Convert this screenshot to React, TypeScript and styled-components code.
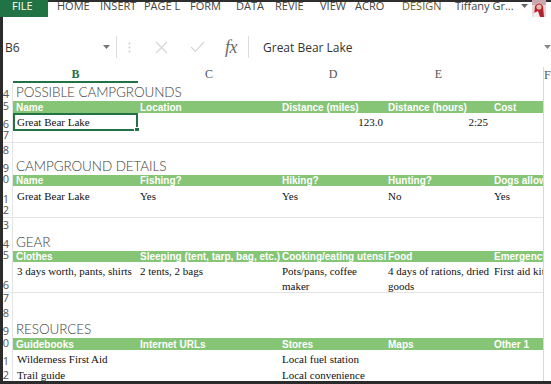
import React from "react";
import styled, { createGlobalStyle } from "styled-components";

const Global = createGlobalStyle`
  html, body { margin: 0; padding: 0; background: #ffffff; }
  body { width: 551px; height: 384px; overflow: hidden; }
  * { box-sizing: border-box; }
`;

const GREEN = "#217346";
const BAND = "#86c476";
const COLS = [125, 142, 106, 105, 52];
const PAD_L = [3, 2, 2, 2, 3];

const Root = styled.div`
  width: 551px;
  height: 384px;
  display: flex;
  flex-direction: column;
  overflow: hidden;
  background: #ffffff;
`;

const TabBar = styled.div`
  height: 17px;
  flex: none;
  display: flex;
  align-items: flex-start;
  background: #ffffff;
  box-shadow: inset 0 2px 0 #2e2e2e;
  font-family: "Open Sans", "Noto Sans", sans-serif;
  font-size: 11px;
  line-height: 12px;
  color: #444;
`;

const FileTab = styled.div`
  width: 48px;
  height: 17px;
  background: ${GREEN};
  color: #ffffff;
  padding-left: 12px;
  margin-right: 9px;
`;

const Tab = styled.div<{ $w: number; $accent?: boolean }>`
  width: ${(p) => p.$w}px;
  flex: none;
  white-space: nowrap;
  overflow: hidden;
  color: ${(p) => (p.$accent ? "#6f5c1c" : "#444")};
`;

const UserTab = styled.div`
  width: 77px;
  flex: none;
  display: flex;
  align-items: center;
  white-space: nowrap;
  gap: 7px;
`;

const Body = styled.div`
  flex: 1;
  display: flex;
  flex-direction: column;
  border-left: 3px solid #2b2b2b;
  border-bottom: 3px solid #2b2b2b;
  min-height: 0;
`;

const FormulaBar = styled.div`
  flex: none;
  height: 50px;
  padding-top: 19px;
  padding-bottom: 9px;
  display: flex;
  align-items: center;
`;

const NameBox = styled.div`
  width: 113px;
  height: 22px;
  display: flex;
  align-items: center;
  justify-content: space-between;
  padding: 0 6px 0 2px;
  font-family: "Open Sans", "Noto Sans", sans-serif;
  font-size: 12px;
  color: #333;
`;

const Sep = styled.div`
  width: 1px;
  height: 22px;
  background: #dcdcdc;
  flex: none;
`;

const Slot = styled.div<{ $w: number }>`
  width: ${(p) => p.$w}px;
  height: 22px;
  flex: none;
  display: flex;
  align-items: center;
  justify-content: center;
`;

const Fx = styled.span`
  font-family: "Liberation Serif", "DejaVu Serif", serif;
  font-style: italic;
  font-size: 18px;
  color: #6a6a6a;
  letter-spacing: -0.5px;
`;

const FormulaText = styled.div`
  flex: 1;
  padding-left: 14px;
  font-family: "Open Sans", "Noto Sans", sans-serif;
  font-size: 12px;
  color: #333;
`;

const Sheet = styled.div`
  flex: 1;
  display: flex;
  min-height: 0;
  overflow: hidden;
`;

const Main = styled.div`
  width: 540px;
  flex: none;
  display: flex;
  flex-direction: column;
  overflow: hidden;
`;

const RightStrip = styled.div`
  flex: 1;
  border-left: 1px solid #d8d8d8;
  overflow: hidden;
`;

const ColHeaderRow = styled.div`
  height: 16px;
  flex: none;
  display: flex;
`;

const Corner = styled.div`
  width: 10px;
  flex: none;
`;

const ColHead = styled.div<{ $w: number; $active?: boolean }>`
  width: ${(p) => p.$w}px;
  flex: none;
  display: flex;
  align-items: center;
  justify-content: center;
  font-family: "Liberation Serif", "DejaVu Serif", serif;
  font-size: 12px;
  font-weight: ${(p) => (p.$active ? 700 : 400)};
  color: ${(p) => (p.$active ? GREEN : "#555")};
  border-bottom: 2px solid ${(p) => (p.$active ? GREEN : "transparent")};
`;

const StripHead = styled.div`
  height: 16px;
  display: flex;
  align-items: center;
  font-family: "Liberation Serif", "DejaVu Serif", serif;
  font-size: 12px;
  color: #555;
`;

const Row = styled.div<{ $h: number; $line?: boolean }>`
  height: ${(p) => p.$h}px;
  flex: none;
  display: flex;
  border-bottom: ${(p) => (p.$line ? "1px solid #e4e4e4" : "none")};
`;

const RowNum = styled.div`
  width: 10px;
  flex: none;
  overflow: hidden;
  white-space: nowrap;
  display: flex;
  align-items: flex-end;
  justify-content: flex-end;
  padding: 0 3px 1px 0;
  border-right: 1px solid #e4e4e4;
  font-family: "Open Sans", "Noto Sans", sans-serif;
  font-size: 11px;
  line-height: 13px;
  color: #555;
`;

const Cells = styled.div<{ $band?: boolean }>`
  flex: 1;
  display: flex;
  background: ${(p) => (p.$band ? BAND : "transparent")};
  overflow: hidden;
`;

const Title = styled.div`
  padding-left: 3px;
  display: flex;
  align-items: center;
  font-family: Lato, "Open Sans", sans-serif;
  font-weight: 300;
  font-size: 13.5px;
  letter-spacing: -0.1px;
  color: #3c3c3c;
  white-space: nowrap;
`;

const HeadCell = styled.div<{ $w: number; $pl: number }>`
  width: ${(p) => p.$w}px;
  flex: none;
  overflow: hidden;
  white-space: nowrap;
  padding-left: ${(p) => p.$pl}px;
  display: flex;
  align-items: center;
  font-family: "Liberation Sans", Arial, sans-serif;
  font-weight: 700;
  font-size: 10px;
  color: #ffffff;
`;

const DataCell = styled.div<{
  $w: number;
  $pl: number;
  $right?: boolean;
  $wrap?: boolean;
  $top?: boolean;
  $sel?: boolean;
}>`
  position: relative;
  width: ${(p) => p.$w}px;
  flex: none;
  white-space: ${(p) => (p.$wrap ? "normal" : "nowrap")};
  overflow: ${(p) => (p.$sel ? "visible" : "hidden")};
  padding-left: ${(p) => (p.$sel ? p.$pl - 2 : p.$pl)}px;
  padding-right: ${(p) => (p.$right ? 3 : 0)}px;
  padding-top: ${(p) => (p.$top ? 2 : 0)}px;
  display: flex;
  align-items: ${(p) => (p.$top ? "flex-start" : "center")};
  justify-content: ${(p) => (p.$right ? "flex-end" : "flex-start")};
  border: ${(p) => (p.$sel ? `2px solid ${GREEN}` : "none")};
  font-family: "Liberation Serif", "Times New Roman", serif;
  font-size: 11px;
  line-height: 15px;
  color: #111;
`;

const Handle = styled.span`
  position: absolute;
  right: -4px;
  bottom: -4px;
  width: 6px;
  height: 6px;
  background: ${GREEN};
  border: 1px solid #ffffff;
`;

type RowDef = {
  n: number;
  h: number;
  kind?: "title" | "head" | "data";
  text?: string;
  cells?: string[];
  line?: boolean;
  wrap?: number[];
  right?: number[];
  sel?: boolean;
};

const rows: RowDef[] = [
  { n: 4, h: 18, kind: "title", text: "POSSIBLE CAMPGROUNDS" },
  { n: 5, h: 12, kind: "head", cells: ["Name", "Location", "Distance (miles)", "Distance (hours)", "Cost"] },
  { n: 6, h: 18, kind: "data", cells: ["Great Bear Lake", "", "123.0", "2:25", ""], right: [2, 3], sel: true },
  { n: 7, h: 12, line: true },
  { n: 8, h: 14 },
  { n: 9, h: 18, kind: "title", text: "CAMPGROUND DETAILS" },
  { n: 10, h: 11, kind: "head", cells: ["Name", "Fishing?", "Hiking?", "Hunting?", "Dogs allowed?"] },
  { n: 11, h: 20, kind: "data", cells: ["Great Bear Lake", "Yes", "Yes", "No", "Yes"] },
  { n: 12, h: 12, line: true },
  { n: 13, h: 14 },
  { n: 14, h: 19, kind: "title", text: "GEAR" },
  { n: 15, h: 11, kind: "head", cells: ["Clothes", "Sleeping (tent, tarp, bag, etc.)", "Cooking/eating utensils", "Food", "Emergency"] },
  {
    n: 16,
    h: 31,
    kind: "data",
    wrap: [0, 1, 2, 3],
    line: true,
    cells: ["3 days worth, pants, shirts", "2 tents, 2 bags", "Pots/pans, coffee maker", "4 days of rations, dried goods", "First aid kit"],
  },
  { n: 17, h: 12 },
  { n: 18, h: 15 },
  { n: 19, h: 18, kind: "title", text: "RESOURCES" },
  { n: 20, h: 12, kind: "head", cells: ["Guidebooks", "Internet URLs", "Stores", "Maps", "Other 1"] },
  { n: 21, h: 18, kind: "data", cells: ["Wilderness First Aid", "", "Local fuel station", "", ""] },
  { n: 22, h: 14, kind: "data", cells: ["Trail guide", "", "Local convenience", "", ""] },
];

const Caret = ({ color = "#777" }: { color?: string }) => (
  <svg width="7" height="4" viewBox="0 0 7 4">
    <path d="M0 0 H7 L3.5 4 Z" fill={color} />
  </svg>
);

const AvatarBox = styled.div`
  width: 14px;
  height: 17px;
  flex: none;
`;

const Avatar = () => (
  <AvatarBox>
    <svg width="14" height="17" viewBox="0 0 14 17">
      <rect width="14" height="17" fill="#e9d6d8" />
      <rect x="0" y="0" width="14" height="5" fill="#c9a9ad" />
      <path d="M3 6 Q7 1 11 6 L12 17 H2 Z" fill="#b3232e" />
      <circle cx="7" cy="7" r="2.6" fill="#e7b7a8" />
      <path d="M2 13 L6 11 L8 17 H1 Z" fill="#f4eeee" />
    </svg>
  </AvatarBox>
);

const renderRow = (r: RowDef) => {
  let content: React.ReactNode = null;
  if (r.kind === "title") {
    content = <Title>{r.text}</Title>;
  } else if (r.kind === "head") {
    content = r.cells!.map((c, i) => (
      <HeadCell key={i} $w={COLS[i]} $pl={PAD_L[i]}>
        {c}
      </HeadCell>
    ));
  } else if (r.kind === "data") {
    content = r.cells!.map((c, i) => {
      const sel = r.sel && i === 0;
      return (
        <DataCell
          key={i}
          $w={COLS[i]}
          $pl={i === 0 ? 4 : PAD_L[i]}
          $right={r.right?.includes(i)}
          $wrap={r.wrap?.includes(i)}
          $top={!!r.wrap}
          $sel={sel}
        >
          {c}
          {sel && <Handle />}
        </DataCell>
      );
    });
  }
  return (
    <Row key={r.n} $h={r.h} $line={r.line}>
      <RowNum>{r.n}</RowNum>
      <Cells $band={r.kind === "head"}>{content}</Cells>
    </Row>
  );
};

export default function App() {
  return (
    <Root>
      <Global />
      <TabBar>
        <FileTab>FILE</FileTab>
        <Tab $w={43}>HOME</Tab>
        <Tab $w={44}>INSERT</Tab>
        <Tab $w={46}>PAGE L</Tab>
        <Tab $w={46}>FORM</Tab>
        <Tab $w={39}>DATA</Tab>
        <Tab $w={45}>REVIE</Tab>
        <Tab $w={35}>VIEW</Tab>
        <Tab $w={47}>ACRO</Tab>
        <Tab $w={53} $accent>
          DESIGN
        </Tab>
        <UserTab>
          <span>Tiffany Gr...</span>
          <Caret color="#666" />
        </UserTab>
        <Avatar />
      </TabBar>
      <Body>
        <FormulaBar>
          <NameBox>
            <span>B6</span>
            <Caret />
          </NameBox>
          <Sep />
          <Slot $w={24}>
            <svg width="3" height="11" viewBox="0 0 3 11">
              <circle cx="1.5" cy="1.5" r="1" fill="#cfcfcf" />
              <circle cx="1.5" cy="5.5" r="1" fill="#cfcfcf" />
              <circle cx="1.5" cy="9.5" r="1" fill="#cfcfcf" />
            </svg>
          </Slot>
          <Slot $w={40}>
            <svg width="13" height="13" viewBox="0 0 13 13">
              <path d="M1 1 L12 12 M12 1 L1 12" stroke="#d6d6d6" strokeWidth="1.2" fill="none" />
            </svg>
          </Slot>
          <Slot $w={33}>
            <svg width="15" height="12" viewBox="0 0 15 12">
              <path d="M1 6 L5.5 10.5 L14 1" stroke="#d6d6d6" strokeWidth="1.2" fill="none" />
            </svg>
          </Slot>
          <Slot $w={34}>
            <Fx>fx</Fx>
          </Slot>
          <Sep />
          <FormulaText>Great Bear Lake</FormulaText>
          <Slot $w={8}>
            <Caret color="#888" />
          </Slot>
        </FormulaBar>
        <Sheet>
          <Main>
            <ColHeaderRow>
              <Corner />
              <ColHead $w={COLS[0]} $active>
                B
              </ColHead>
              <ColHead $w={COLS[1]}>C</ColHead>
              <ColHead $w={COLS[2]}>D</ColHead>
              <ColHead $w={COLS[3]}>E</ColHead>
              <ColHead $w={COLS[4]} />
            </ColHeaderRow>
            {rows.map(renderRow)}
          </Main>
          <RightStrip>
            <StripHead>F</StripHead>
          </RightStrip>
        </Sheet>
      </Body>
    </Root>
  );
}
